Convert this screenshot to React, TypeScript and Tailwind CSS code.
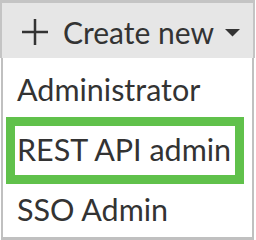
const font = { fontFamily: "Lato, 'Open Sans', sans-serif" };

const items = ["Administrator", "REST API admin", "SSO Admin"];

export default function App() {
  return (
    <div className="w-[256px] h-[240px] bg-white overflow-hidden text-[#333]" style={font}>
      {/* Trigger button */}
      <div className="w-[255px] h-[58px] bg-[#e6e6e6] border-t-[3px] border-x-2 border-[#c4c4c4] flex items-center pl-[20px] pt-[2px]">
        <svg width="26" height="26" viewBox="0 0 26 26" className="shrink-0">
          <path d="M13 0v26M0 13h26" stroke="#333" strokeWidth="2.5" fill="none" />
        </svg>
        <span className="ml-[15px] text-[30px] leading-[1.2]">Create new</span>
        <svg width="15" height="8" viewBox="0 0 15 8" className="ml-[11px] mt-[3px] shrink-0">
          <path d="M0 0h15L7.5 7.5z" fill="#333" />
        </svg>
      </div>

      {/* Menu */}
      <div className="w-[253px] ml-[1px] h-[182px] border-x-2 border-b-[3px] border-[#c0c0c0] bg-white pt-[1px]">
        {items.map((label, i) => (
          <div key={label} className="relative h-[60px] pl-[14px] text-[30.5px] leading-[60px]">
            {label}
            {i === 1 && (
              <div className="absolute left-[3px] top-[-2px] w-[238px] h-[67px] border-[9px] border-[#60c14b]" />
            )}
          </div>
        ))}
      </div>
    </div>
  );
}
